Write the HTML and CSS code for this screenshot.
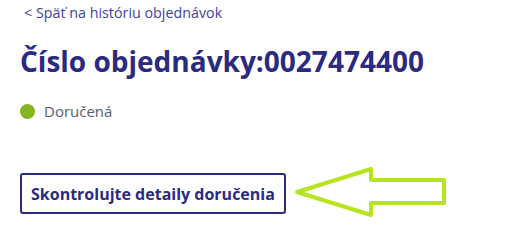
FILE: index.html
```html
<!DOCTYPE html>
<html lang="sk">
<head>
<meta charset="utf-8">
<link rel="stylesheet" href="styles.css">
</head>
<body>
<main class="page">
  <a class="back" href="#">&lt; Späť na históriu objednávok</a>
  <h1 class="title">Číslo objednávky:0027474400</h1>
  <div class="status"><span class="dot"></span><span class="status-text">Doručená</span></div>
  <div class="actions">
    <button class="btn">Skontrolujte detaily doručenia</button>
  </div>
  <svg class="arrow" width="160" height="60" viewBox="0 0 160 60">
    <polygon points="6,27 80,4 80,15 153,15 153,38 80,38 80,50" fill="none" stroke="#b6e51e" stroke-width="4" stroke-linejoin="round"/>
  </svg>
</main>
</body>
</html>
```
FILE: styles.css
```css
html, body { margin: 0; padding: 0; background: #fff; }
body { font-family: "Open Sans", "Noto Sans", sans-serif; }
.page { position: relative; padding: 3px 20px 0 20px; width: 519px; height: 229px; box-sizing: border-box; }
.back { display: block; margin-left: 4px; font-size: 14.3px; line-height: 19px; color: #3f3f9a; text-decoration: none; }
.title { margin: 20px 0 0 0; font-size: 28px; line-height: 38px; font-weight: 700; color: #2a2b80; }
.status { display: flex; align-items: center; gap: 9px; margin-top: 21px; }
.dot { width: 15px; height: 15px; border-radius: 50%; background: #86b51f; }
.status-text { font-size: 15px; line-height: 20px; color: #55606e; }
.actions { margin-top: 52px; }
.btn { font-family: inherit; font-weight: 700; font-size: 16px; color: #2a2b80; background: #fff; border: 2px solid #2a2b80; border-radius: 3px; height: 41px; padding: 0 9px; }
.arrow { position: absolute; left: 291px; top: 165px; }
```
